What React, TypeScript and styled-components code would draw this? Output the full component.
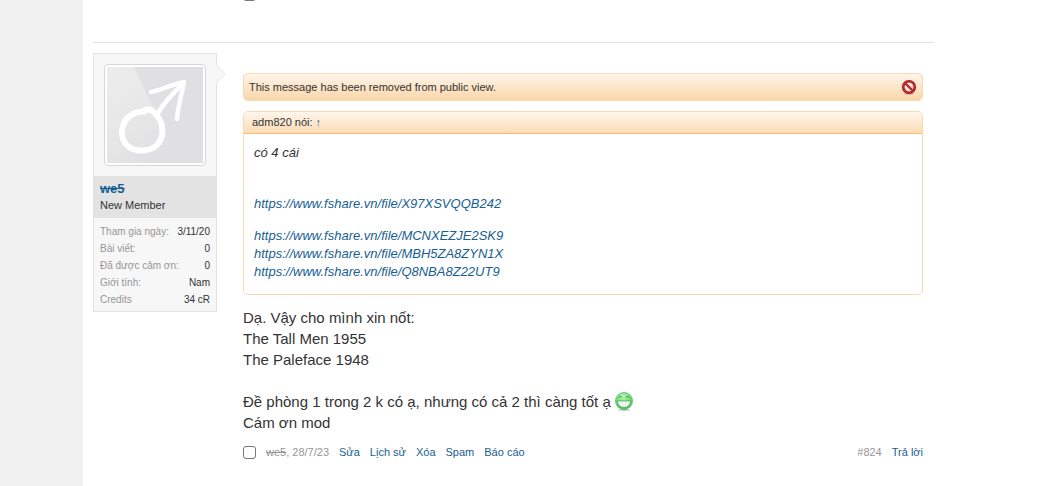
import React from "react";
import styled, { createGlobalStyle } from "styled-components";

const GlobalStyle = createGlobalStyle`
  * { box-sizing: border-box; }
  body {
    margin: 0;
    background: #f0f0f0;
    color: #333;
    font-family: "Liberation Sans", Arial, sans-serif;
    font-size: 11px;
    line-height: 16px;
  }
  a { color: #176093; text-decoration: none; }
  p, dl, dd, h3, blockquote { margin: 0; }
`;

const Page = styled.main`
  margin-left: 83px;
  padding: 0 118px 0 10px;
  min-height: 100vh;
  background: #fff;
`;

const Checkbox = styled.input`
  appearance: none;
  flex: none;
  width: 13px;
  height: 13px;
  margin: 0;
  border: 1px solid #767676;
  border-radius: 3px;
  background: #fff;
`;

const PreviousFooter = styled.div`
  display: flex;
  align-items: flex-end;
  height: 1px;
  margin-left: 150px;
  overflow: hidden;
`;

const Message = styled.article`
  display: flex;
  gap: 26px;
  margin-top: 41px;
  padding: 10px 11px 10px 0;
  border-top: 1px solid #e3e3e3;
`;

const UserCard = styled.aside`
  position: relative;
  flex: none;
  align-self: flex-start;
  width: 124px;
  border: 1px solid #e3e3e3;
  background: #f7f7f7;
`;

const CardArrow = styled.svg`
  position: absolute;
  top: 10px;
  left: 100%;
`;

const Avatar = styled.a`
  display: block;
  width: 102px;
  height: 102px;
  margin: 10px;
  padding: 2px;
  border: 1px solid #d7d7d7;
  border-radius: 4px;
  background: #fff;

  svg { display: block; }
`;

const UserText = styled.div`
  padding: 5px 6px;
  background: #e3e3e3;
`;

const UserName = styled.a`
  display: block;
  font-size: 13px;
  font-weight: bold;
  text-decoration: line-through;
`;

const Stats = styled.dl`
  padding: 5px 6px 3px;
  font-size: 10px;
  line-height: 17px;
`;

const Stat = styled.div`
  display: flex;
  justify-content: space-between;
  white-space: nowrap;

  dt { color: #969696; }
`;

const Content = styled.div`
  flex: 1;
  min-width: 0;
  padding-top: 20px;
`;

const Notice = styled.div`
  display: flex;
  align-items: center;
  justify-content: space-between;
  height: 28px;
  padding: 0 5px;
  border: 1px solid #f9d9b0;
  border-radius: 5px;
  background: linear-gradient(#fff5e9, #f9d6aa);
`;

const Quote = styled.blockquote`
  margin-top: 10px;
  border: 1px solid #f9d9b0;
  border-radius: 5px;
  overflow: hidden;
`;

const QuoteHeader = styled.div`
  padding: 2px 8px 3px;
  border-bottom: 1px solid #f9bc6d;
  background: linear-gradient(#fff6ec, #fadcb6);
`;

const QuoteBody = styled.div`
  padding: 10px 10px 13px;
  font-size: 13px;
  font-style: italic;
  line-height: 18px;

  a { display: block; }
`;

const QuoteLine = styled.p<{ $after?: number }>`
  margin-bottom: ${(p) => p.$after ?? 0}px;
`;

const MessageText = styled.div`
  margin-top: 12px;
  font-size: 15px;
  line-height: 21px;

  svg { vertical-align: -4px; }
`;

const Footer = styled.footer`
  display: flex;
  align-items: center;
  gap: 10px;
  margin-top: 11px;
  color: #969696;
`;

const Author = styled.span`
  a { color: #969696; text-decoration: line-through; }
`;

const Permalink = styled.a`
  margin-left: auto;
  && { color: #969696; }
`;

const MaleAvatar = () => (
  <svg width="96" height="96" viewBox="0 0 96 96" aria-hidden="true">
    <defs>
      <linearGradient id="shine" x1="0" y1="0" x2="0.6" y2="1">
        <stop offset="0" stopColor="#ececed" />
        <stop offset="0.5" stopColor="#e8e8e9" />
        <stop offset="1" stopColor="#e0e0e2" />
      </linearGradient>
    </defs>
    <rect width="96" height="96" fill="#e0e0e2" />
    <path d="M0 0H27L73 96H0Z" fill="url(#shine)" />
    <g fill="none" stroke="#fff" strokeLinecap="round" strokeLinejoin="round">
      <path
        d="M37 45C29 44 21 48 17 56C13 65 15 75 22 80C29 85 43 85 50 78C57 71 57 58 51 50C47 43 41 41 36 44"
        strokeWidth="6"
      />
      <path d="M51 46C57 36 66 26 76 17" strokeWidth="4.5" />
      <path d="M44 25C54 23 66 17 77 15C75 27 71 39 70 52" strokeWidth="4.5" />
    </g>
  </svg>
);

const DeletedIcon = () => (
  <svg width="16" height="16" viewBox="0 0 16 16" aria-hidden="true">
    <ellipse cx="8" cy="14.8" rx="5" ry="1" fill="#a88e70" opacity="0.5" />
    <circle cx="8" cy="8" r="5.8" fill="#f5e6dc" stroke="#8e1418" strokeWidth="2.6" />
    <path d="M4.2 4.2L11.8 11.8" stroke="#a51a1d" strokeWidth="2.2" />
    <circle cx="8" cy="8" r="5.8" fill="none" stroke="#cb2f2f" strokeWidth="1.3" />
    <path d="M4.2 4.2L11.8 11.8" stroke="#cb2f2f" strokeWidth="1.2" />
  </svg>
);

const GrinIcon = () => (
  <svg width="18" height="19" viewBox="0 0 18 19" role="img" aria-label="grin">
    <defs>
      <radialGradient id="face" cx="0.45" cy="0.25" r="0.8">
        <stop offset="0" stopColor="#b4f5b4" />
        <stop offset="0.55" stopColor="#71dc76" />
        <stop offset="1" stopColor="#3fb34c" />
      </radialGradient>
    </defs>
    <ellipse cx="9" cy="17.9" rx="6" ry="1" fill="#888" opacity="0.5" />
    <circle cx="9" cy="9" r="8.5" fill="url(#face)" stroke="#58bd62" strokeWidth="0.8" />
    <path d="M3.4 5.8Q5.2 3 7 5.6M11 5.6Q12.8 3 14.6 5.8" fill="none" stroke="#2c9140" strokeWidth="0.9" />
    <path d="M2.4 9H15.6Q15.2 15.2 9 15.4Q2.8 15.2 2.4 9Z" fill="#fff" stroke="#3d9c4c" strokeWidth="0.7" />
    <path d="M5 9.5V13.6M7.6 9.5V15M10.4 9.5V15M13 9.5V13.6" stroke="#bfd3c1" strokeWidth="0.6" />
  </svg>
);

const stats: [string, string][] = [
  ["Tham gia ngày:", "3/11/20"],
  ["Bài viết:", "0"],
  ["Đã được cảm ơn:", "0"],
  ["Giới tính:", "Nam"],
  ["Credits", "34 cR"],
];

const files = ["MCNXEZJE2SK9", "MBH5ZA8ZYN1X", "Q8NBA8Z22UT9"];
const actions = ["Sửa", "Lịch sử", "Xóa", "Spam", "Báo cáo"];

const FileLink = ({ id }: { id: string }) => {
  const url = `https://www.fshare.vn/file/${id}`;
  return <a href={url}>{url}</a>;
};

export default function App() {
  return (
    <>
      <GlobalStyle />
      <Page>
        <PreviousFooter>
          <Checkbox type="checkbox" aria-label="Select previous message" />
        </PreviousFooter>
        <Message>
          <UserCard>
            <Avatar href="#we5" aria-label="we5">
              <MaleAvatar />
            </Avatar>
            <UserText>
              <UserName href="#we5">we5</UserName>
              <div>New Member</div>
            </UserText>
            <Stats>
              {stats.map(([label, value]) => (
                <Stat key={label}>
                  <dt>{label}</dt>
                  <dd>{value}</dd>
                </Stat>
              ))}
            </Stats>
            <CardArrow width="10" height="20" viewBox="0 0 10 20" aria-hidden="true">
              <path d="M0 0L9 10L0 20Z" fill="#f7f7f7" />
              <path d="M0.5 1L9 10L0.5 19" fill="none" stroke="#e3e3e3" />
            </CardArrow>
          </UserCard>
          <Content>
            <Notice>
              <span>This message has been removed from public view.</span>
              <DeletedIcon />
            </Notice>
            <Quote>
              <QuoteHeader>
                adm820 nói: <a href="#source">↑</a>
              </QuoteHeader>
              <QuoteBody>
                <QuoteLine $after={33}>có 4 cái</QuoteLine>
                <QuoteLine as="div" $after={14}>
                  <FileLink id="X97XSVQQB242" />
                </QuoteLine>
                {files.map((id) => (
                  <FileLink key={id} id={id} />
                ))}
              </QuoteBody>
            </Quote>
            <MessageText>
              Dạ. Vậy cho mình xin nốt:
              <br />
              The Tall Men 1955
              <br />
              The Paleface 1948
              <br />
              <br />
              Đề phòng 1 trong 2 k có ạ, nhưng có cả 2 thì càng tốt ạ <GrinIcon />
              <br />
              Cám ơn mod
            </MessageText>
            <Footer>
              <Checkbox type="checkbox" aria-label="Select message #824" />
              <Author>
                <a href="#we5">we5</a>, 28/7/23
              </Author>
              {actions.map((label) => (
                <a key={label} href="#action">
                  {label}
                </a>
              ))}
              <Permalink href="#824">#824</Permalink>
              <a href="#reply">Trả lời</a>
            </Footer>
          </Content>
        </Message>
      </Page>
    </>
  );
}
